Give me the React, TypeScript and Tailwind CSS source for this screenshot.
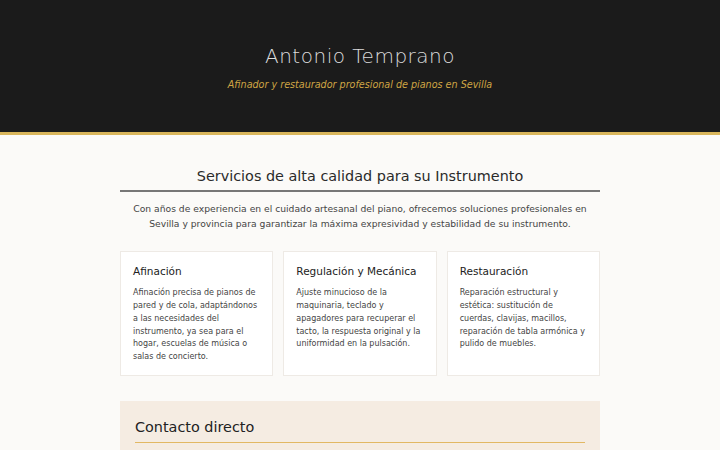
export default function App() {
  const services = [
    {
      title: "Afinación",
      text: "Afinación precisa de pianos de pared y de cola, adaptándonos a las necesidades del instrumento, ya sea para el hogar, escuelas de música o salas de concierto.",
    },
    {
      title: "Regulación y Mecánica",
      text: "Ajuste minucioso de la maquinaria, teclado y apagadores para recuperar el tacto, la respuesta original y la uniformidad en la pulsación.",
    },
    {
      title: "Restauración",
      text: "Reparación estructural y estética: sustitución de cuerdas, clavijas, macillos, reparación de tabla armónica y pulido de muebles.",
    },
  ];

  return (
    <div className="min-h-screen bg-[#fbfaf8] font-['DejaVu_Sans',sans-serif] text-[#2a2a2a]">
      <header className="h-[135px] bg-[#1b1b1b] border-b-[3px] border-[#d9b65c] flex flex-col items-center pt-[44px]">
        <h1 className="text-[20px] font-light tracking-[0.5px] text-[#dcdcdc] leading-[24px]">
          Antonio Temprano
        </h1>
        <p className="mt-[9px] text-[9.6px] leading-[15px] italic text-[#cfa544]">
          Afinador y restaurador profesional de pianos en Sevilla
        </p>
      </header>

      <main className="w-[480px] mx-auto pt-[31px]">
        <h2 className="text-[14.4px] text-center leading-[20px] pb-[4px] border-b-2 border-[#777]">
          Servicios de alta calidad para su Instrumento
        </h2>
        <p className="mt-[10px] text-[9.2px] leading-[14.7px] text-center text-[#444]">
          Con años de experiencia en el cuidado artesanal del piano, ofrecemos soluciones profesionales en Sevilla y provincia para garantizar la máxima expresividad y estabilidad de su instrumento.
        </p>

        <div className="mt-[20px] grid grid-cols-3 gap-[10px]">
          {services.map((s) => (
            <div key={s.title} className="bg-white border border-[#eeeae5] h-[125px] px-[12px] pt-[11px]">
              <h3 className="text-[10.5px] leading-[16px] text-[#222]">{s.title}</h3>
              <p className="mt-[8px] text-[8px] leading-[12.7px] text-[#444]">{s.text}</p>
            </div>
          ))}
        </div>

        <section className="mt-[25px] bg-[#f5ece2] px-[15px] pt-[16px] h-[60px]">
          <h2 className="text-[14.4px] leading-[20px] pb-[5px] border-b border-[#e2b863] text-[#222]">
            Contacto directo
          </h2>
        </section>
      </main>
    </div>
  );
}
